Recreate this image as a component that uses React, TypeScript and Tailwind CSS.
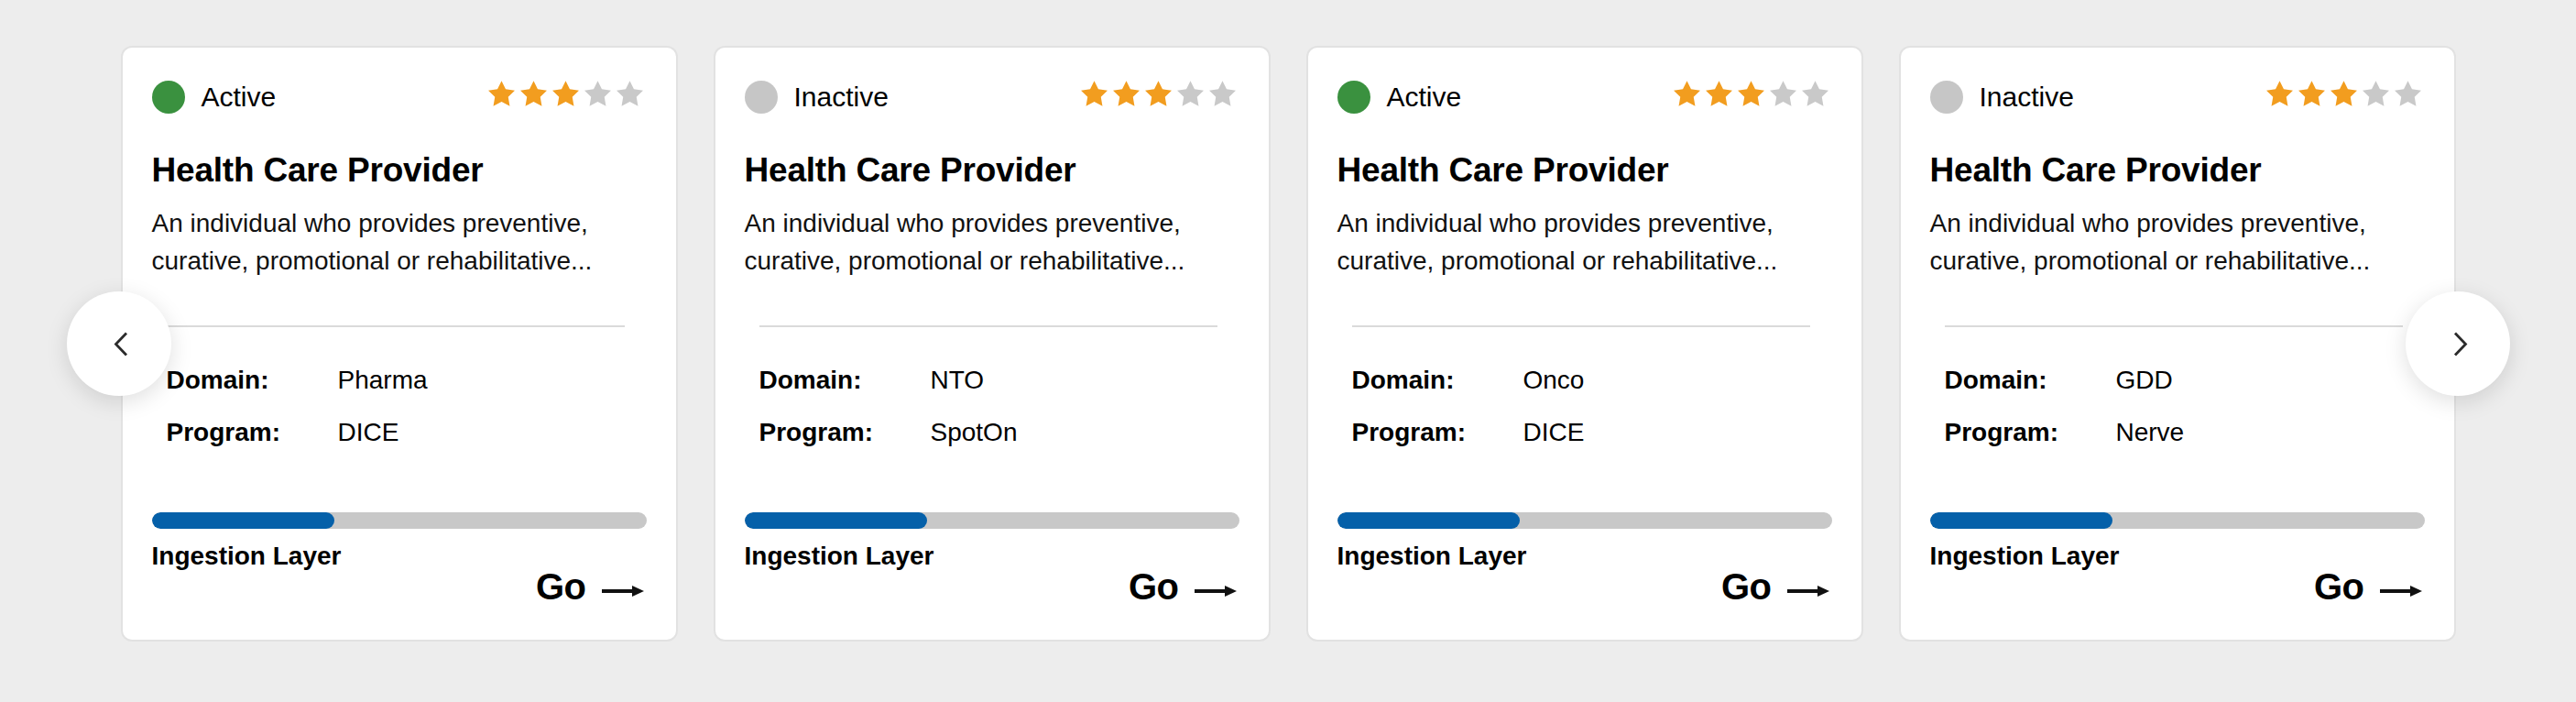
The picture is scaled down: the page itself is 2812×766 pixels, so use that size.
type Item = {
  active: boolean;
  domain: string;
  program: string;
};

const items: Item[] = [
  { active: true, domain: "Pharma", program: "DICE" },
  { active: false, domain: "NTO", program: "SpotOn" },
  { active: true, domain: "Onco", program: "DICE" },
  { active: false, domain: "GDD", program: "Nerve" },
];

function Star({ on }: { on: boolean }) {
  return (
    <svg width="29" height="28" viewBox="2 2 20 19.1" fill={on ? "#f29d1f" : "#c9c9c9"}>
      <path d="M12 2l3.09 6.26L22 9.27l-5 4.87 1.18 6.88L12 17.77l-6.18 3.25L7 14.14 2 9.27l6.91-1.01L12 2z" />
    </svg>
  );
}

function Card({ item }: { item: Item }) {
  return (
    <div className="flex w-[608px] shrink-0 flex-col rounded-[12px] border-2 border-[#e2e2e2] bg-white px-[32px] pt-[36px] pb-[38px] text-black">
      <div className="flex h-9 items-center justify-between">
        <div className="flex items-center gap-[18px]">
          <span
            className={
              item.active
                ? "h-9 w-9 rounded-full bg-[#3a913f]"
                : "h-9 w-9 rounded-full bg-[#c6c6c6]"
            }
          />
          <span className="text-[30px] leading-[36px]">{item.active ? "Active" : "Inactive"}</span>
        </div>
        <div className="mr-1 flex gap-[6px] self-start">
          {[0, 1, 2, 3, 4].map((i) => (
            <Star key={i} on={i < 3} />
          ))}
        </div>
      </div>

      <h2 className="mt-[44px] text-[37px] font-bold leading-[36px] tracking-[-0.2px]">
        Health Care Provider
      </h2>
      <p className="mt-[19px] text-[28px] leading-[41px] text-[#111]">
        An individual who provides preventive, curative, promotional or rehabilitative...
      </p>

      <div className="ml-4 mt-[50px] h-[2px] w-[500px] bg-[#dadada]" />

      <div className="mt-[38px] flex h-10 items-center pl-4 text-[28px] leading-[40px]">
        <span className="w-[187px] font-bold">Domain:</span>
        <span>{item.domain}</span>
      </div>
      <div className="mt-[17px] flex h-10 items-center pl-4 text-[28px] leading-[40px]">
        <span className="w-[187px] font-bold">Program:</span>
        <span>{item.program}</span>
      </div>

      <div className="mt-[67px] h-[18px] w-full overflow-hidden rounded-full bg-[#c8c8c8]">
        <div className="h-full w-[37%] rounded-full bg-[#0560a9]" />
      </div>

      <div className="mt-[14px] flex items-start justify-between">
        <span className="text-[28px] font-bold leading-[32px]">Ingestion Layer</span>
        <div className="mr-[3px] mt-[29px] flex items-center gap-[17px]">
          <span className="text-[40px] font-bold leading-[40px] tracking-[-0.5px]">Go</span>
          <svg width="46" height="14" viewBox="0 0 46 14" className="mt-[10px]">
            <rect x="0" y="5" width="36" height="4" fill="#111" />
            <path d="M33 1 L46 7 L33 13 Z" fill="#111" />
          </svg>
        </div>
      </div>
    </div>
  );
}

function NavButton({ dir }: { dir: "left" | "right" }) {
  return (
    <button
      className={
        dir === "left"
          ? "absolute left-[-59px] top-1/2 flex h-[114px] w-[114px] -translate-y-1/2 items-center justify-center rounded-full bg-white pl-[4px] shadow-[0_6px_24px_rgba(0,0,0,0.13)]"
          : "absolute right-[-59px] top-1/2 flex h-[114px] w-[114px] -translate-y-1/2 items-center justify-center rounded-full bg-white pl-[6px] shadow-[0_6px_24px_rgba(0,0,0,0.13)]"
      }
    >
      <svg width="16" height="27" viewBox="0 0 16 27" fill="none">
        <path
          d={dir === "left" ? "M14 1.5 L2.5 13.5 L14 25.5" : "M2 1.5 L13.5 13.5 L2 25.5"}
          stroke="#2b2b2b"
          strokeWidth="2.8"
        />
      </svg>
    </button>
  );
}

export default function App() {
  return (
    <div
      className="flex h-[766px] w-full justify-center bg-[#ededed] pt-[50px]"
      style={{ fontFamily: '"Liberation Sans", Arial, sans-serif' }}
    >
      <div className="relative flex h-[650px] gap-[39px]">
        {items.map((item, i) => (
          <Card key={i} item={item} />
        ))}
        <NavButton dir="left" />
        <NavButton dir="right" />
      </div>
    </div>
  );
}
